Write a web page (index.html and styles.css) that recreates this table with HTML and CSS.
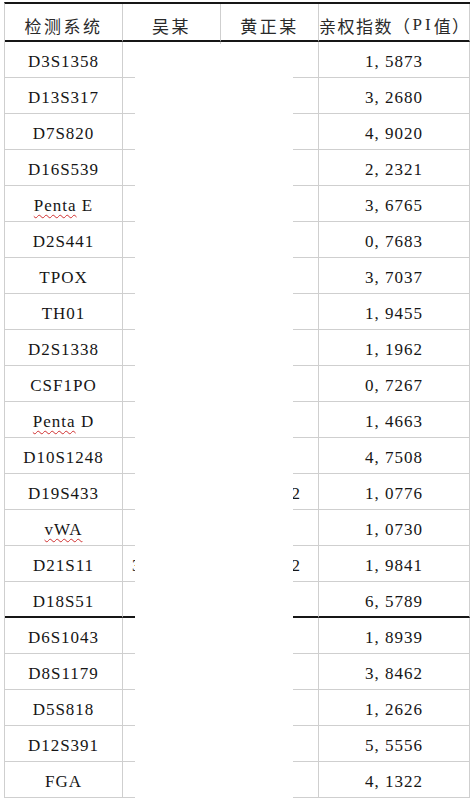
FILE: index.html
```html
<!DOCTYPE html>
<html lang="zh-CN">
<head>
<meta charset="utf-8">
<title>亲权指数</title>
<link rel="stylesheet" href="styles.css">
</head>
<body>
<div class="sheet">
  <div class="row head">
    <div class="cell">检测系统</div>
    <div class="cell">吴某</div>
    <div class="cell">黄正某</div>
    <div class="cell pi">亲权指数（<span class="lat">PI</span>值）</div>
  </div>
  <div class="row"><div class="cell">D3S1358</div><div class="cell a"></div><div class="cell b"></div><div class="cell">1, 5873</div></div>
  <div class="row"><div class="cell">D13S317</div><div class="cell a"></div><div class="cell b"></div><div class="cell">3, 2680</div></div>
  <div class="row"><div class="cell">D7S820</div><div class="cell a"></div><div class="cell b"></div><div class="cell">4, 9020</div></div>
  <div class="row"><div class="cell">D16S539</div><div class="cell a"></div><div class="cell b"></div><div class="cell">2, 2321</div></div>
  <div class="row"><div class="cell"><span><span class="spell">Penta</span> E</span></div><div class="cell a"></div><div class="cell b"></div><div class="cell">3, 6765</div></div>
  <div class="row"><div class="cell">D2S441</div><div class="cell a"></div><div class="cell b"></div><div class="cell">0, 7683</div></div>
  <div class="row"><div class="cell">TPOX</div><div class="cell a"></div><div class="cell b"></div><div class="cell">3, 7037</div></div>
  <div class="row"><div class="cell">TH01</div><div class="cell a"></div><div class="cell b"></div><div class="cell">1, 9455</div></div>
  <div class="row"><div class="cell">D2S1338</div><div class="cell a"></div><div class="cell b"></div><div class="cell">1, 1962</div></div>
  <div class="row"><div class="cell">CSF1PO</div><div class="cell a"></div><div class="cell b"></div><div class="cell">0, 7267</div></div>
  <div class="row"><div class="cell"><span><span class="spell">Penta</span> D</span></div><div class="cell a"></div><div class="cell b"></div><div class="cell">1, 4663</div></div>
  <div class="row"><div class="cell">D10S1248</div><div class="cell a"></div><div class="cell b"></div><div class="cell">4, 7508</div></div>
  <div class="row"><div class="cell">D19S433</div><div class="cell a"></div><div class="cell b">2</div><div class="cell">1, 0776</div></div>
  <div class="row"><div class="cell"><span class="spell">vWA</span></div><div class="cell a"></div><div class="cell b"></div><div class="cell">1, 0730</div></div>
  <div class="row"><div class="cell">D21S11</div><div class="cell a">3</div><div class="cell b">2</div><div class="cell">1, 9841</div></div>
  <div class="row split"><div class="cell">D18S51</div><div class="cell a"></div><div class="cell b"></div><div class="cell">6, 5789</div></div>
  <div class="row"><div class="cell">D6S1043</div><div class="cell a"></div><div class="cell b"></div><div class="cell">1, 8939</div></div>
  <div class="row"><div class="cell">D8S1179</div><div class="cell a"></div><div class="cell b"></div><div class="cell">3, 8462</div></div>
  <div class="row"><div class="cell">D5S818</div><div class="cell a"></div><div class="cell b"></div><div class="cell">1, 2626</div></div>
  <div class="row"><div class="cell">D12S391</div><div class="cell a"></div><div class="cell b"></div><div class="cell">5, 5556</div></div>
  <div class="row"><div class="cell">FGA</div><div class="cell a"></div><div class="cell b"></div><div class="cell">4, 1322</div></div>
  <div class="mask"></div>
</div>
</body>
</html>
```
FILE: styles.css
```css
* { box-sizing: border-box; }
html, body { margin: 0; padding: 0; background: #fff; }
body {
  font-family: "Liberation Serif", "Noto Sans CJK SC", serif;
  color: #161616;
}
.sheet {
  position: relative;
  width: 466px;
  margin: 2px 0 0 4px;
  border-top: 2px solid #161616;
  border-left: 1px solid #cfcfcf;
}
.row {
  display: grid;
  grid-template-columns: 118px 98px 98px 151px;
  height: 36px;
}
.cell {
  border-right: 1px solid #cfcfcf;
  border-bottom: 1px solid #cfcfcf;
  display: flex;
  align-items: center;
  justify-content: center;
  padding-top: 5px;
  font-size: 17px;
  letter-spacing: 1px;
  white-space: nowrap;
}
.row.head { height: 38px; }
.head .cell {
  border-bottom: 2px solid #161616;
  padding-top: 6px;
  letter-spacing: 2.5px;
  color: #2a2a2a;
}
.head .cell.pi { letter-spacing: 1.5px; justify-content: flex-start; padding-left: 0; }
.lat { letter-spacing: 3px; margin-left: 1px; }
.row.split .cell { border-bottom: 2px solid #161616; }
.cell.a { justify-content: flex-start; padding-left: 9px; }
.cell.b { justify-content: flex-end; padding-right: 17px; }
.spell {
  text-decoration: underline wavy #d03030;
  text-decoration-thickness: 1px;
  text-underline-offset: 3px;
}
.mask {
  position: absolute;
  left: 130px;
  top: 40px;
  width: 158px;
  bottom: -10px;
  background: #fff;
}
```
